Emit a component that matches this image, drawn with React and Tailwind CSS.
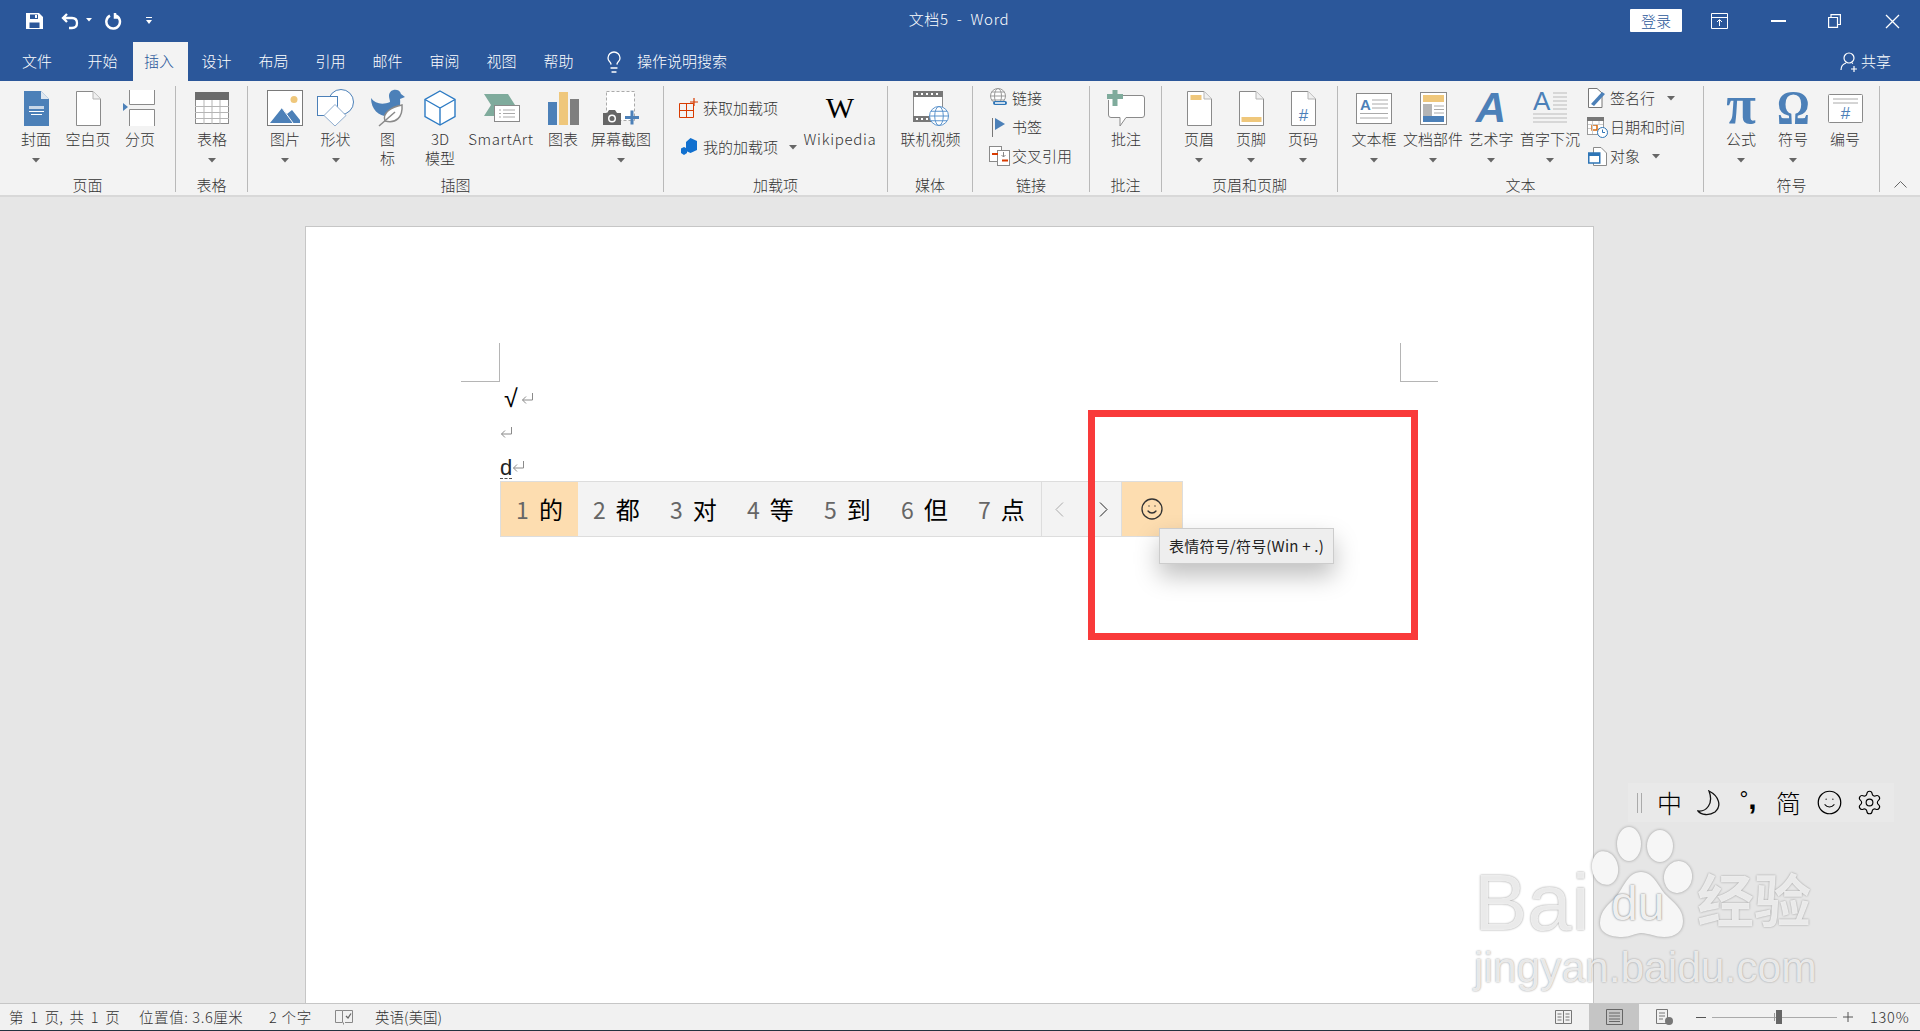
import { Settings, Lightbulb, Smile } from "lucide-react"

const blue = "#4c80b8"
const yellow = "#efc77b"

function Caret() {
  return (
    <svg width="8" height="5" viewBox="0 0 8 5">
      <path d="M0 0H8L4 4.5Z" fill="#666" />
    </svg>
  )
}

function Ret({ className }) {
  return (
    <svg width="13" height="11" viewBox="0 0 13 11" className={className} fill="none" stroke="#8a8a8a">
      <path d="M11.5 0V7H1.5M5 3.5L1.5 7L5 10.5" />
    </svg>
  )
}

const Page = ({ children, w = 25, h = 35 }) => (
  <svg width={w} height={h} viewBox={`0 0 ${w} ${h}`}>
    <path d={`M.5 .5H${w - 8}L${w - .5} 8V${h - .5}H.5Z`} fill="#fff" stroke="#8a8a8a" />
    <path d={`M${w - 8} .5V8H${w - .5}`} fill="#f0f0f0" stroke="#b5b5b5" />
    {children}
  </svg>
)

const CoverIcon = () => (
  <svg width="25" height="35" viewBox="0 0 25 35">
    <path d="M0 0H17L25 8V35H0Z" fill={blue} />
    <path d="M17 0L25 8H17Z" fill="#dfe7f0" />
    <path d="M5 15H20V18H5Z" fill="#c8d7e8" />
    <path d="M5 20.5H20M7 23.5H18" stroke="#fff" />
  </svg>
)

const BreakIcon = () => (
  <svg width="32" height="36" viewBox="0 0 32 36">
    <path d="M6.500 0V14.500H31.500V0" fill="#fff" stroke="#8a8a8a" />
    <path d="M6.500 36V19.500H31.500V36" fill="#fff" stroke="#8a8a8a" />
    <path d="M0 13L5 17L0 21Z" fill={blue} />
  </svg>
)

const TableIcon = () => (
  <svg width="34" height="32" viewBox="0 0 34 32">
    <rect x=".5" y=".5" width="33" height="31" fill="#fff" stroke="#8a8a8a" />
    <rect x="0" y="0" width="34" height="8" fill="#6b6b6b" />
    <path d="M0 14.500H34M0 20.500H34M0 26.500H34M9 8V32M17 8V32M25 8V32" stroke="#b5b5b5" />
  </svg>
)

const PictureIcon = () => (
  <svg width="36" height="36" viewBox="0 0 36 36">
    <rect x=".5" y=".5" width="35" height="35" fill="#fff" stroke="#7a7a7a" />
    <ellipse cx="27" cy="9.500" rx="3.500" ry="3.500" fill={yellow} />
    <path d="M3 33L15 18L20 24L25 20L33 30V33Z" fill={blue} />
    <path d="M15 18L26 33" stroke="#fff" fill="none" />
  </svg>
)

const ShapesIcon = () => (
  <svg width="37" height="38" viewBox="0 0 37 38">
    <circle cx="24" cy="13" r="12.500" fill="#fff" stroke={blue} />
    <rect x=".5" y="7.500" width="20" height="19" fill="#fff" stroke={blue} />
    <path d="M18 15.500L29 26.500L18 37L7 26.500Z" fill="#fff" stroke="#8fadcf" />
  </svg>
)

const BirdIcon = () => (
  <svg width="34" height="38" viewBox="0 0 34 38">
    <path d="M18 7C18 -1 29 -1 30 5L34 8L29 10C30 18 27 25 20 27C10 29 0 22 0 9C4 15 12 16 19 13C19 11 18 9 18 7Z" fill={blue} />
    <path d="M31 16C32 28 25 35 14 32C11 24 20 18 31 16Z" fill="#fff" stroke="#8a8a8a" strokeWidth="1.500" />
    <path d="M8 37L24 23" stroke="#8a8a8a" strokeWidth="1.500" />
  </svg>
)

const CubeIcon = () => (
  <svg width="32" height="36" viewBox="0 0 32 36" fill="none" stroke="#2d7bc4" strokeWidth="1.400">
    <path d="M16 1L31 9.500V26.500L16 35L1 26.500V9.500Z" fill="#fff" />
    <path d="M1 9.500L16 18L31 9.500M16 18V35" />
  </svg>
)

const SmartArtIcon = () => (
  <svg width="37" height="29" viewBox="0 0 37 29">
    <path d="M1 0H25L32 11H11V22H1L8 11Z" fill="#7fab9c" />
    <rect x="11.500" y="11.500" width="25" height="16" fill="#fff" stroke="#8a8a8a" />
    <path d="M16 16H18M20 16H32M16 19.500H18M20 19.500H32M16 23H18M20 23H32" stroke="#aaa" />
  </svg>
)

const ChartIcon = () => (
  <svg width="31" height="33" viewBox="0 0 31 33">
    <rect x="0" y="10" width="9" height="23" fill={blue} />
    <rect x="11" y="0" width="9" height="33" fill={yellow} />
    <rect x="22" y="7" width="9" height="26" fill="#7f7f7f" />
  </svg>
)

const ShotIcon = () => (
  <svg width="37" height="36" viewBox="0 0 37 36">
    <rect x="3.500" y="1.500" width="28" height="29" fill="#fff" stroke="#aaa" strokeDasharray="3 2" />
    <path d="M0 23H4L6 20H12L14 23H18V35H0Z" fill="#666" />
    <circle cx="9" cy="28.500" r="4" fill="#fff" />
    <circle cx="9" cy="28.500" r="2.500" fill="#666" />
    <path d="M22 27.500H36M29 20.500V34.500" stroke={blue} strokeWidth="3" />
  </svg>
)

const GetAddinIcon = () => (
  <svg width="20" height="20" viewBox="0 0 20 20" fill="none" stroke="#d83b01">
    <path d="M.5 5.500H14.500V19.500H.5ZM.5 12.500H14.500M7.500 5.500V19.500" />
    <path d="M15 0V8M11 4H19" strokeWidth="1.200" />
  </svg>
)

const MyAddinIcon = () => (
  <svg width="17" height="18" viewBox="0 0 17 18">
    <path d="M9.500 0L16 3V12L9.500 15L5 13V4Z" fill="#1170cf" />
    <path d="M3 9L6 10.500V15L3 17L0 15V10.500Z" fill="#1170cf" />
  </svg>
)

const Globe = ({ x, y, r }) => (
  <g fill="none" stroke="#5b93cc">
    <circle cx={x} cy={y} r={r} fill="#fff" />
    <ellipse cx={x} cy={y} rx={r * 0.45} ry={r} />
    <path d={`M${x - r} ${y}H${x + r}M${x - r * .85} ${y - r * .5}H${x + r * .85}M${x - r * .85} ${y + r * .5}H${x + r * .85}`} />
  </g>
)

const VideoIcon = () => (
  <svg width="36" height="35" viewBox="0 0 36 35">
    <rect x=".5" y=".5" width="29" height="30" fill="#fff" stroke="#8a8a8a" />
    <rect x="0" y="0" width="30" height="6" fill="#777" />
    <rect x="0" y="25" width="30" height="6" fill="#777" />
    <path d="M3 2H5V4H3ZM8 2H10V4H8ZM13 2H15V4H13ZM18 2H20V4H18ZM23 2H25V4H23ZM3 27H5V29H3ZM8 27H10V29H8ZM13 27H15V29H13Z" fill="#fff" />
    <Globe x={26} y={25} r={9.500} />
  </svg>
)

const LinkIcon = () => (
  <svg width="20" height="20" viewBox="0 0 20 20">
    <g fill="none" stroke="#999">
      <circle cx="9" cy="8" r="7.500" fill="#fff" />
      <ellipse cx="9" cy="8" rx="3.500" ry="7.500" />
      <path d="M1.500 8H16.500M2.500 4H15.500M2.500 12H15.500" />
    </g>
    <path d="M6 15H11M11 15H16" stroke="#2e75b6" strokeWidth="4" strokeLinecap="round" />
    <path d="M6 15H16" stroke="#fff" strokeWidth="1.500" />
  </svg>
)

const FlagIcon = () => (
  <svg width="14" height="19" viewBox="0 0 14 19">
    <path d="M.5 0V19" stroke="#777" />
    <path d="M3 0L13 6L3 12Z" fill={blue} />
  </svg>
)

const CrossRefIcon = () => (
  <svg width="21" height="20" viewBox="0 0 21 20">
    <rect x=".5" y=".5" width="12" height="15" fill="#fff" stroke="#8a8a8a" />
    <rect x="8.500" y="4.500" width="12" height="15" fill="#fff" stroke="#8a8a8a" />
    <path d="M3 8H9M13 14.500H19" stroke="#d83b01" strokeWidth="2" />
    <path d="M14.500 6V11M12.500 9L14.500 11L16.500 9" stroke="#888" fill="none" />
  </svg>
)

const CommentIcon = () => (
  <svg width="38" height="37" viewBox="0 0 38 37">
    <path d="M6 5.500H35Q37.500 5.500 37.500 8V25Q37.500 27.500 35 27.500H19L13 36V27.500H4Q1.500 27.500 1.500 25V10" fill="#fff" stroke="#8a8a8a" />
    <path d="M0 6.500H16M8 0V16" stroke="#7fab9c" strokeWidth="5" />
  </svg>
)

const TextBoxIcon = () => (
  <svg width="36" height="31" viewBox="0 0 36 31">
    <rect x=".5" y=".5" width="35" height="30" fill="#fff" stroke="#8a8a8a" />
    <text x="4" y="17" fontSize="15" fontWeight="700" fill={blue} fontFamily="Liberation Sans">A</text>
    <path d="M16 7H32M16 11H32M16 15H32M4 20.500H32M4 25H32" stroke="#aaa" />
  </svg>
)

const DocPartsIcon = () => (
  <svg width="27" height="33" viewBox="0 0 27 33">
    <rect x=".5" y=".5" width="26" height="32" fill="#fff" stroke="#8a8a8a" />
    <rect x="3" y="3" width="21" height="7" fill={yellow} />
    <rect x="3" y="12" width="9" height="13" fill="#b5b5b5" />
    <rect x="3" y="24" width="21" height="6" fill={blue} />
    <path d="M14 14H24M14 17.500H24M14 21H24" stroke="#aaa" />
  </svg>
)

const DropCapIcon = () => (
  <svg width="35" height="34" viewBox="0 0 35 34">
    <text x="0" y="19" fontSize="26" fontWeight="400" fill={blue} fontFamily="Liberation Sans">A</text>
    <path d="M20 2H34M20 6H34M20 10H34M20 14H34M20 18H34M0 23H34M0 27H34M0 31H34" stroke="#bbb" />
  </svg>
)

const SignIcon = () => (
  <svg width="18" height="20" viewBox="0 0 18 20">
    <path d="M.5 .5H9L14 5V19.500H.5Z" fill="#fff" stroke="#777" />
    <path d="M3 16L14 4L17 6L6 18Z" fill={blue} />
  </svg>
)

const DateIcon = () => (
  <svg width="21" height="21" viewBox="0 0 21 21">
    <rect x=".5" y=".5" width="16" height="17" fill="#fff" stroke="#999" />
    <rect x="0" y="0" width="17" height="4" fill="#777" />
    <rect x="5" y="8" width="5" height="5" fill="#fff" stroke="#d86b10" strokeWidth="1.500" />
    <path d="M1 7.500H16M1 11.500H4M11 11.500H16M5.500 4V17M12 4V8" stroke="#ccc" />
    <circle cx="15.500" cy="15.500" r="5" fill="#fff" stroke="#2e75b6" />
    <path d="M15.500 12.500V15.500H18" fill="none" stroke="#2e75b6" />
  </svg>
)

const ObjectIcon = () => (
  <svg width="19" height="19" viewBox="0 0 19 19">
    <path d="M5.500 .5H13L18.500 6V18.500H5.500Z" fill="#fff" stroke="#8a8a8a" />
    <rect x=".75" y="6" width="11" height="10" fill="#fff" stroke="#2e75b6" strokeWidth="1.500" />
    <rect x="1" y="6" width="10.500" height="3" fill="#2e75b6" />
  </svg>
)

function Big({ w, icon, label, caret }) {
  return (
    <div className={`${w} flex flex-col items-center pt-[4px] shrink-0`}>
      <div className="h-[36px] flex items-center justify-center">{icon}</div>
      <div className="mt-[3px] leading-[19px] whitespace-nowrap text-center">{label}</div>
      {caret && <div className="mt-[3px] h-[19px] flex items-center"><Caret /></div>}
    </div>
  )
}

function Group({ w, name, children, inner = "" }) {
  return (
    <div className={`${w} h-[106px] shrink-0 flex flex-col border-r border-[#b9b9b9]`}>
      <div className={`flex h-[90px] ${inner}`}>{children}</div>
      <div className="h-[16px] leading-[17px] text-center whitespace-nowrap">{name}</div>
    </div>
  )
}

function Row({ icon, text, caret, ml = "ml-[3px]" }) {
  return (
    <div className="h-[24px] flex items-center">
      <div className="w-[22px] flex justify-center">{icon}</div>
      <span className={`${ml} whitespace-nowrap`}>{text}</span>
      {caret}
    </div>
  )
}

function TitleBar() {
  return (
    <div className="h-[42px] flex items-center text-white">
      <div className="flex-1 flex items-center pl-[26px]">
        <svg width="17" height="16" viewBox="0 0 17 16" fill="#fff">
          <path d="M0 0H13L17 4V16H0ZM4 1.500V6H12V1.500ZM3.500 15H13.500V9.500H3.500Z" fillRule="evenodd" />
          <rect x="9" y="2" width="2" height="3" />
        </svg>
        <svg className="ml-[18px]" width="18" height="17" viewBox="0 0 18 17" fill="none" stroke="#fff" strokeWidth="2.300">
          <path d="M6 1L2 5L6 9M2 5H11C14 5 16 7 16 10C16 13 14 15 11 15H8" />
        </svg>
        <svg className="ml-[7px] mb-[3px]" width="6" height="4" viewBox="0 0 6 4"><path d="M0 0H6L3 3.500Z" fill="#fff" /></svg>
        <svg className="ml-[13px]" width="17" height="17" viewBox="0 0 17 17" fill="none" stroke="#fff" strokeWidth="2.500">
          <path d="M10 2.200A6.800 6.800 0 1 1 5 2.700M10 0V4.500H14" />
        </svg>
        <svg className="ml-[24px]" width="6" height="8" viewBox="0 0 6 8" fill="#fff">
          <path d="M0 0H6V1H0ZM0 3H6L3 7Z" />
        </svg>
      </div>
      <div className="text-[15px] pb-[3px] pr-[8px] tracking-[0.7px] whitespace-pre font-light">文档5  -  Word</div>
      <div className="flex-1 flex items-center justify-end pr-[20px]">
        <div className="w-[52px] h-[23px] bg-white rounded-[1px] text-[#2b579a] text-[15px] leading-[23px] text-center mb-[1px]">登录</div>
        <svg className="ml-[29px]" width="17" height="16" viewBox="0 0 17 16" fill="none" stroke="#fff">
          <path d="M.5 .5H16.500V15.500H.5ZM.5 4.500H16.500M8.500 13V7M6 9L8.500 6.500L11 9" />
        </svg>
        <div className="ml-[43px] w-[15px] h-[1.500px] bg-white" />
        <svg className="ml-[42px]" width="13" height="14" viewBox="0 0 13 14" fill="none" stroke="#fff" strokeWidth="1.200">
          <path d="M.6 3.500H9.500V13.400H.6ZM3 3.500V.6H12.400V10.500H9.500" />
        </svg>
        <svg className="ml-[44px]" width="15" height="15" viewBox="0 0 15 15" stroke="#fff" strokeWidth="1.300">
          <path d="M1 1L14 14M14 1L1 14" />
        </svg>
      </div>
    </div>
  )
}

function Tabs() {
  const rest = ["设计", "布局", "引用", "邮件", "审阅", "视图", "帮助"]
  return (
    <div className="h-[39px] flex items-center text-white">
      <div className="w-[74px] text-center">文件</div>
      <div className="w-[57px] mr-[2px] text-center">开始</div>
      <div className="w-[55px] h-full bg-[#f3f3f3] text-[#2b579a] flex items-center justify-center pr-[3px]">插入</div>
      {rest.map((t) => (
        <div key={t} className="w-[57px] text-center">{t}</div>
      ))}
      <Lightbulb className="ml-[15px]" size={24} strokeWidth={1.300} />
      <div className="ml-[11px]">操作说明搜索</div>
      <div className="ml-auto flex items-center pr-[29px]">
        <svg width="19" height="20" viewBox="0 0 19 20" fill="none" stroke="#fff" strokeWidth="1.200">
          <circle cx="9" cy="6" r="5" />
          <path d="M1 18C1 14 3 12 6 11M12 11L13 11.500M14 14V20M11 17H17" />
        </svg>
        <span className="ml-[2px]">共享</span>
      </div>
    </div>
  )
}

function Ribbon() {
  return (
    <div className="h-[116px] py-[5px] bg-[#f3f3f3] border-b-2 border-[#d8d8d8] flex text-[15px] font-light text-[#333]">
      <Group w="w-[176px]" name="页面" inner="pl-[10px]">
        <Big w="w-[52px]" icon={<CoverIcon />} label="封面" caret />
        <Big w="w-[52px]" icon={<Page />} label="空白页" />
        <Big w="w-[52px]" icon={<span className="block mr-[3px]"><BreakIcon /></span>} label="分页" />
      </Group>
      <Group w="w-[72px]" name="表格">
        <Big w="w-[72px]" icon={<TableIcon />} label="表格" caret />
      </Group>
      <Group w="w-[416px]" name="插图" inner="pl-[12px]">
        <Big w="w-[50px]" icon={<PictureIcon />} label="图片" caret />
        <Big w="w-[51px]" icon={<ShapesIcon />} label="形状" caret />
        <Big w="w-[53px]" icon={<BirdIcon />} label={<>图<br />标</>} />
        <Big w="w-[52px]" icon={<CubeIcon />} label={<>3D<br />模型</>} />
        <Big w="w-[70px]" icon={<SmartArtIcon />} label={<span className="tracking-[0.6px]">SmartArt</span>} />
        <Big w="w-[54px]" icon={<ChartIcon />} label="图表" />
        <Big w="w-[62px]" icon={<ShotIcon />} label="屏幕截图" caret />
      </Group>
      <Group w="w-[224px]" name="加载项" inner="pl-[14px]">
        <div className="w-[124px] shrink-0 pt-[10px] flex flex-col gap-[15px]">
          <Row icon={<GetAddinIcon />} text="获取加载项" />
          <Row icon={<MyAddinIcon />} text="我的加载项" caret={<span className="ml-[11px]"><Caret /></span>} />
        </div>
        <Big w="w-[76px]" icon={<span className="font-['Liberation_Serif'] text-[30px] leading-[36px] font-normal text-black">W</span>} label={<span className="tracking-[0.7px]">Wikipedia</span>} />
      </Group>
      <Group w="w-[85px]" name="媒体">
        <Big w="w-[85px]" icon={<VideoIcon />} label="联机视频" />
      </Group>
      <Group w="w-[117px]" name="链接" inner="pl-[15px]">
        <div className="flex flex-col gap-[5px]">
          <Row icon={<LinkIcon />} text="链接" ml="ml-[2px]" />
          <Row icon={<FlagIcon />} text="书签" ml="ml-[2px]" />
          <Row icon={<CrossRefIcon />} text="交叉引用" ml="ml-[2px]" />
        </div>
      </Group>
      <Group w="w-[72px]" name="批注">
        <Big w="w-[72px]" icon={<CommentIcon />} label="批注" />
      </Group>
      <Group w="w-[176px]" name="页眉和页脚" inner="pl-[11px]">
        <Big w="w-[52px]" icon={<Page><rect x="3.500" y="4" width="11" height="5" fill={yellow} /></Page>} label="页眉" caret />
        <Big w="w-[52px]" icon={<Page><rect x="2.500" y="26" width="20" height="5" fill={yellow} /></Page>} label="页脚" caret />
        <Big w="w-[52px]" icon={<Page><text x="12.500" y="30" textAnchor="middle" fontSize="17" fill={blue} fontFamily="Liberation Sans">#</text></Page>} label="页码" caret />
      </Group>
      <Group w="w-[366px]" name="文本" inner="pl-[8px]">
        <Big w="w-[56px]" icon={<TextBoxIcon />} label="文本框" caret />
        <Big w="w-[62px]" icon={<DocPartsIcon />} label="文档部件" caret />
        <Big w="w-[54px]" icon={<span className="font-['Liberation_Sans'] italic font-bold text-[42px] leading-[36px] text-[#4c80b8]">A</span>} label="艺术字" caret />
        <Big w="w-[64px]" icon={<DropCapIcon />} label="首字下沉" caret />
        <div className="ml-[4px] flex flex-col gap-[5px]">
          <Row icon={<SignIcon />} text="签名行" ml="ml-[2px]" caret={<span className="ml-[12px]"><Caret /></span>} />
          <Row icon={<DateIcon />} text="日期和时间" ml="ml-[2px]" />
          <Row icon={<ObjectIcon />} text="对象" ml="ml-[2px]" caret={<span className="ml-[12px]"><Caret /></span>} />
        </div>
      </Group>
      <Group w="w-[176px]" name="符号" inner="pl-[11px]">
        <Big w="w-[52px]" icon={<span className="font-['Liberation_Serif'] font-bold text-[54px] leading-[36px] pb-[6px] text-[#4c80b8]">π</span>} label="公式" caret />
        <Big w="w-[52px]" icon={<span className="font-['Liberation_Serif'] font-bold text-[48px] leading-[36px] scale-x-[0.85] text-[#4c80b8]">Ω</span>} label="符号" caret />
        <Big
          w="w-[52px]"
          icon={
            <svg width="35" height="29" viewBox="0 0 35 29">
              <rect x=".5" y=".5" width="34" height="28" rx="1" fill="#fff" stroke="#8a8a8a" />
              <path d="M5 5H30M5 9H30" stroke="#aaa" />
              <text x="17.500" y="25" textAnchor="middle" fontSize="17" fill={blue} fontFamily="Liberation Sans">#</text>
            </svg>
          }
          label="编号"
        />
      </Group>
      <div className="flex-1 flex items-end justify-center pb-[2px]">
        <svg width="13" height="7" viewBox="0 0 13 7" fill="none" stroke="#666">
          <path d="M.5 6.500L6.500 .5L12.500 6.500" />
        </svg>
      </div>
    </div>
  )
}

function Document() {
  return (
    <div className="flex-1 bg-[#e6e6e6] pt-[29px] pl-[305px] pr-[326px] flex min-h-0">
      <div className="flex-1 bg-white border-x border-t border-[#c6c6c6] pt-[116px] px-[155px] text-black">
        <div className="flex justify-between">
          <div className="w-[39px] h-[39px] border-r border-b border-[#b5b5b5]" />
          <div className="w-[38px] h-[39px] border-l border-b border-[#b5b5b5]" />
        </div>
        <div className="pl-[43px] h-[32px] flex items-center font-['Liberation_Sans'] text-[25px] leading-none">
          <span>√</span>
          <Ret className="ml-[3px]" />
        </div>
        <div className="pl-[39px] h-[36px] flex items-center"><Ret /></div>
        <div className="pl-[39px] h-[36px] flex items-center font-['Liberation_Sans'] text-[22px] text-[#222]">
          <span className="border-b border-dashed border-[#555] leading-[20px]">d</span>
          <Ret className="mb-[4px]" />
        </div>
      </div>
    </div>
  )
}

function Candidates() {
  const items = [["2", "都"], ["3", "对"], ["4", "等"], ["5", "到"], ["6", "但"], ["7", "点"]]
  return (
    <div className="absolute left-[500px] top-[481px] w-[683px] h-[56px] flex bg-[#f3f3f3] border border-[#dddddd] text-[23px]">
      <div className="w-[77px] bg-[#fdddb0] flex items-center justify-center gap-[10px]">
        <span className="text-[#666]">1</span>
        <span className="text-black text-[24px]">的</span>
      </div>
      {items.map(([n, c]) => (
        <div key={n} className="w-[77px] flex items-center pl-[15px] gap-[10px]">
          <span className="text-[#666]">{n}</span>
          <span className="text-black text-[24px]">{c}</span>
        </div>
      ))}
      <div className="w-[81px] ml-[1px] border-l border-r border-[#dddddd] flex items-center justify-between px-[13px]">
        <svg width="9" height="15" viewBox="0 0 9 15" fill="none" stroke="#aaa"><path d="M8 .5L1 7.500L8 14.500" /></svg>
        <svg width="9" height="15" viewBox="0 0 9 15" fill="none" stroke="#222"><path d="M1 .5L8 7.500L1 14.500" /></svg>
      </div>
      <div className="flex-1 bg-[#fdddb0] flex items-center justify-center">
        <Smile size={24} strokeWidth={1.300} color="#333" />
      </div>
    </div>
  )
}

function ImeBar() {
  return (
    <div className="absolute left-[1628px] top-[783px] w-[266px] h-[39px] bg-[#e9e9e9] flex items-center text-black text-[25px]">
      <div className="ml-[9px] w-[5px] h-[20px] border-x border-[#aaa]" />
      <span className="ml-[15px] w-[25px] text-center font-light">中</span>
      <svg className="ml-[15px]" width="24" height="26" viewBox="0 0 24 26" fill="none" stroke="#111" strokeWidth="1.300">
        <path d="M12 1C22 6 25 16 18 22C12 26 4 25 1 21C9 22 17 14 12 1Z" />
      </svg>
      <span className="ml-[14px] w-[26px] flex items-start justify-center font-['Liberation_Sans'] leading-none">
        <span className="text-[22px] mt-[-3px]">°</span>
        <span className="font-bold text-[30px] mt-[-8px]">,</span>
      </span>
      <span className="ml-[15px] w-[25px] text-center font-light">简</span>
      <Smile className="ml-[15px]" size={27} strokeWidth={1.100} />
      <Settings className="ml-[13px]" size={27} strokeWidth={1.000} />
    </div>
  )
}

function Watermark() {
  return (
    <div className="absolute left-[1474px] top-[822px] w-[350px] text-[#f4f4f4]/90 [text-shadow:0_0_2px_#8f8f8f]">
      <div className="flex h-[120px]">
        <div className="w-[116px] pt-[36px] font-['Liberation_Sans'] text-[80px] leading-[90px]">Bai</div>
        <div className="relative w-[107px]">
          <svg className="drop-shadow-[0_0_1.500px_#999]" width="102" height="118" viewBox="0 0 102 118" fill="#f6f6f6">
            <ellipse cx="15" cy="46" rx="13" ry="17" transform="rotate(-12 15 46)" />
            <ellipse cx="39" cy="22" rx="12" ry="17" />
            <ellipse cx="70" cy="24" rx="13" ry="16" />
            <ellipse cx="88" cy="55" rx="14" ry="16" transform="rotate(10 88 55)" />
            <path d="M51 50C38 50 34 65 26 75C18 83 10 89 10 101C10 111 20 115 32 115C40 115 46 111 51 111C58 111 66 115 74 115C86 115 93 109 93 99C93 87 84 81 76 73C68 65 64 50 51 50Z" />
          </svg>
          <div className="absolute left-[21px] top-[54px] font-['Liberation_Sans'] text-[48px] leading-[56px] text-[#efefef] [text-shadow:0_0_2px_#666]">du</div>
        </div>
        <div className="pt-[40px] font-['Noto_Sans_CJK_SC'] font-bold text-[57px] leading-[70px] whitespace-nowrap">经验</div>
      </div>
      <div className="mt-[1px] font-['Liberation_Sans'] text-[42.500px] leading-[50px] whitespace-nowrap">jingyan.baidu.com</div>
    </div>
  )
}

function StatusBar() {
  return (
    <div className="h-[28px] shrink-0 bg-[#f1f1f1] border-t border-[#c6c6c6] border-b border-b-[#22333f] flex items-center text-[14.500px] font-light text-[#333]">
      <div className="w-[139px] pl-[9px] whitespace-pre [word-spacing:3.500px]">第 1 页, 共 1 页</div>
      <div className="w-[130px] whitespace-nowrap tracking-[0.6px]">位置值: 3.6厘米</div>
      <div className="w-[66px] whitespace-pre tracking-[0.8px]">2 个字</div>
      <svg className="w-[18px]" width="18" height="16" viewBox="0 0 18 16" fill="none" stroke="#888">
        <path d="M.5 1.500H7.500V13.500H.5ZM8.500 13.500V15.500M7.500 1.500H17.500V13.500H10" />
        <path d="M11 7L13 9L16 4.500" stroke="#666" strokeWidth="1.300" />
      </svg>
      <div className="ml-[22px] whitespace-nowrap">英语(美国)</div>
      <div className="ml-auto h-full flex items-center pr-[10px]">
        <svg width="17" height="15" viewBox="0 0 17 15" fill="none" stroke="#777">
          <path d="M.5 .5H8.500V13.500H.5ZM8.500 .5H16.500V13.500H8.500ZM2.500 4H6.500M2.500 7H6.500M2.500 10H6.500M10.500 4H14.500M10.500 7H14.500M10.500 10H14.500" />
        </svg>
        <div className="ml-[17px] w-[50px] h-full bg-[#c5c5c5] flex items-center justify-center">
          <svg width="17" height="16" viewBox="0 0 17 16" fill="none" stroke="#666">
            <path d="M.5 .5H16.500V15.500H.5ZM3 4H14M3 7H14M3 10H14M3 12.500H14" />
          </svg>
        </div>
        <svg className="ml-[17px]" width="17" height="16" viewBox="0 0 17 16">
          <path d="M.5 .5H11.500V14.500H.5ZM3 4H9M3 7H9M3 10H7" fill="none" stroke="#777" />
          <circle cx="13" cy="12" r="4" fill="#777" />
        </svg>
        <div className="ml-[23px] w-[10px] h-px bg-[#555]" />
        <div className="relative ml-[6px] w-[125px] h-[14px] flex items-center">
          <div className="w-full h-px bg-[#aaa]" />
          <div className="absolute left-[62px] top-[3px] w-px h-[8px] bg-[#999]" />
          <div className="absolute left-[64px] top-0 w-[6px] h-[14px] bg-[#666]" />
        </div>
        <svg className="ml-[6px]" width="10" height="10" viewBox="0 0 10 10" stroke="#555"><path d="M0 5H10M5 0V10" /></svg>
        <div className="ml-[17px] w-[40px] whitespace-nowrap tracking-[0.8px]">130%</div>
      </div>
    </div>
  )
}

export default function App() {
  return (
    <div className="relative w-[1920px] h-[1031px] overflow-hidden flex flex-col font-['Noto_Sans_CJK_SC','Liberation_Sans',sans-serif]">
      <div className="bg-[#2b579a] h-[81px] shrink-0 text-[15px] font-light">
        <TitleBar />
        <Tabs />
      </div>
      <Ribbon />
      <Document />
      <StatusBar />

      <Candidates />
      <div className="absolute left-[1159px] top-[528px] w-[175px] h-[36px] bg-[#eeeeee] border border-[#cccccc] text-[15px] tracking-[0.2px] text-[#222] flex items-center justify-center shadow-[0_12px_24px_rgba(0,0,0,0.25)] whitespace-nowrap">
        表情符号/符号(Win + .)
      </div>
      <div className="absolute left-[1088px] top-[410px] w-[330px] h-[230px] border-[7px] border-[#f93a3a]" />
      <ImeBar />
      <Watermark />
    </div>
  )
}
